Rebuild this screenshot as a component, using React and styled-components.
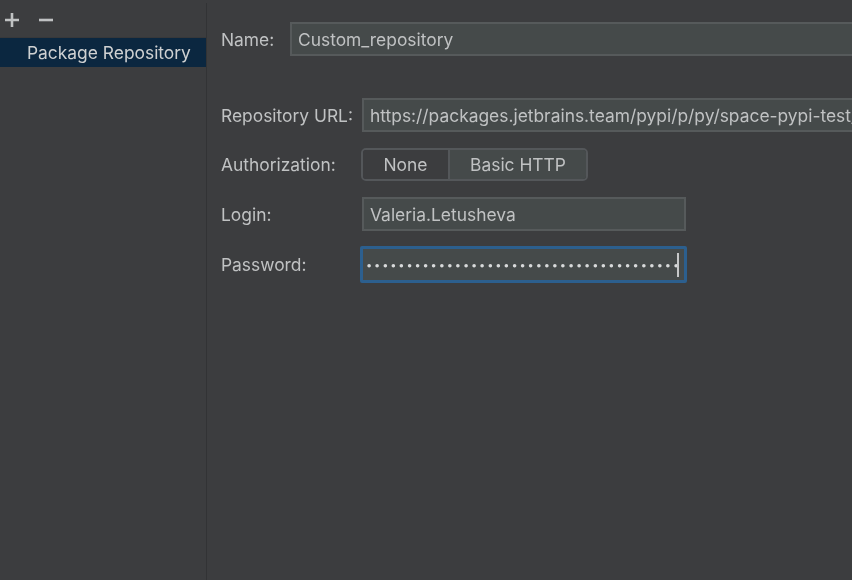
import React from "react";
import styled, { createGlobalStyle } from "styled-components";

const Global = createGlobalStyle`
  html, body { margin: 0; padding: 0; background: #3c3d3f; }
  #root { width: 852px; height: 580px; overflow: hidden; }
`;

const Dialog = styled.div`
  display: flex;
  width: 852px;
  height: 580px;
  overflow: hidden;
  background: #3c3d3f;
  color: #c0c2c3;
  font-family: Inter, "Noto Sans", sans-serif;
  font-size: 17.4px;
  filter: blur(0.35px);
`;

const Sidebar = styled.aside`
  flex: none;
  width: 207px;
  margin-top: 3px;
  box-sizing: border-box;
  border-right: 1px solid #323335;
  display: flex;
  flex-direction: column;
`;

const Toolbar = styled.div`
  display: flex;
  align-items: center;
  gap: 18px;
  height: 35px;
  padding: 0 4px;
  box-sizing: border-box;
  border-bottom: 1px solid #37383a;
`;

const ToolIcon = styled.svg`
  width: 16px;
  height: 16px;
  margin-top: -1px;
  stroke: #c0c2c3;
  stroke-width: 2.6;
  fill: none;
`;

const TreeRow = styled.div`
  height: 29px;
  display: flex;
  align-items: center;
  padding-left: 27px;
  background: #0b2740;
  color: #cfd1d2;
  white-space: nowrap;
`;

const Content = styled.main`
  flex: none;
  width: 700px;
  padding: 22px 0 0 14px;
  box-sizing: border-box;
`;

const Row = styled.div`
  display: flex;
  align-items: center;
  margin-top: ${(p) => p.$top}px;
`;

const Label = styled.label`
  flex: none;
  width: ${(p) => p.$width}px;
  white-space: nowrap;
`;

const Field = styled.div`
  flex: none;
  width: ${(p) => p.$width}px;
  height: 34px;
  box-sizing: border-box;
  padding: 0 6px;
  display: flex;
  align-items: center;
  background: #454a4a;
  border: 2px solid #565a5b;
  color: #c0c2c3;
  white-space: nowrap;
  overflow: hidden;
`;

const FocusField = styled.div`
  flex: none;
  width: 327px;
  height: 37px;
  margin-left: -2px;
  box-sizing: border-box;
  padding: 0 3px;
  display: flex;
  align-items: center;
  background: #454a4a;
  border: 3px solid #2c5f8e;
  border-radius: 2px;
  white-space: nowrap;
  overflow: hidden;
`;

const Dots = styled.span`
  flex: none;
  color: #d8dadb;
  font-size: 11px;
  letter-spacing: 1.89px;
`;

const Caret = styled.span`
  flex: none;
  width: 2px;
  height: 24px;
  margin-left: -4px;
  background: #c6c8c9;
`;

const Segmented = styled.div`
  display: flex;
  height: 33px;
  width: 227px;
  margin-left: -1px;
  box-sizing: border-box;
  border: 2px solid #54575a;
  border-radius: 5px;
  overflow: hidden;
`;

const Segment = styled.div`
  display: flex;
  align-items: center;
  justify-content: center;
  flex: ${(p) => p.$grow};
  background: ${(p) => (p.$active ? "#454a4a" : "#3c3d3f")};
  border-left: ${(p) => (p.$active ? "2px solid #54575a" : "none")};
`;

export default function App() {
  return (
    <>
      <Global />
      <Dialog>
        <Sidebar>
          <Toolbar>
            <ToolIcon viewBox="0 0 16 16"><path d="M8 1v14M1 8h14" /></ToolIcon>
            <ToolIcon viewBox="0 0 16 16"><path d="M1 8h14" /></ToolIcon>
          </Toolbar>
          <TreeRow>Package Repository</TreeRow>
        </Sidebar>
        <Content>
          <Row $top={0}>
            <Label $width={69}>Name:</Label>
            <Field $width={600}>Custom_repository</Field>
          </Row>
          <Row $top={42}>
            <Label $width={141}>Repository URL:</Label>
            <Field $width={600}>https://packages.jetbrains.team/pypi/p/py/space-pypi-test/</Field>
          </Row>
          <Row $top={16}>
            <Label $width={141}>Authorization:</Label>
            <Segmented>
              <Segment $grow="0 0 85px">None</Segment>
              <Segment $grow="1" $active>Basic HTTP</Segment>
            </Segmented>
          </Row>
          <Row $top={16}>
            <Label $width={141}>Login:</Label>
            <Field $width={324}>Valeria.Letusheva</Field>
          </Row>
          <Row $top={15}>
            <Label $width={141}>Password:</Label>
            <FocusField>
              <Dots>{"•".repeat(39)}</Dots>
              <Caret />
            </FocusField>
          </Row>
        </Content>
      </Dialog>
    </>
  );
}
